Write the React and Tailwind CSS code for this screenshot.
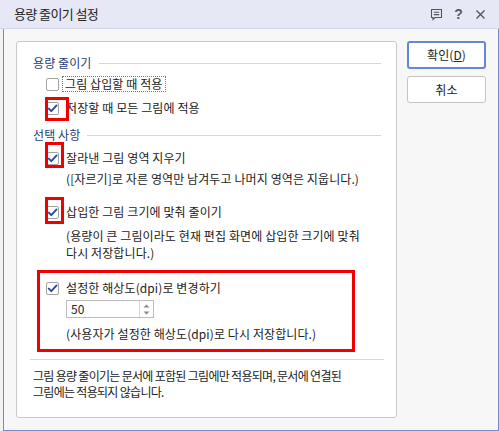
import React from "react";

const FONT = { fontFamily: '"Noto Sans CJK KR", "Noto Sans", sans-serif' };

function Check({ checked }) {
  return (
    <span className="w-[13px] h-[13px] border border-[#a3a3a3] bg-white rounded-[2px] flex items-center justify-center shrink-0">
      {checked && (
        <svg width="11" height="11" viewBox="0 0 11 11">
          <path d="M1.8 5.6 L4.3 8.2 L9.6 2.4" stroke="#2a4a9c" strokeWidth="1.9" fill="none" strokeLinecap="round" strokeLinejoin="round" />
        </svg>
      )}
    </span>
  );
}

function Header({ children, className }) {
  return (
    <div className={"flex items-center h-[16px] pr-[15px] " + (className || "")}>
      <span className="text-[#1f3b78]">{children}</span>
      <div className="flex-1 h-px bg-[#d8d8d8] ml-[7px]" />
    </div>
  );
}

function Row({ checked, children, className }) {
  return (
    <div className={"flex items-center h-[16px] ml-[13px] " + (className || "")}>
      <Check checked={checked} />
      <span className="ml-[7px]">{children}</span>
    </div>
  );
}

export default function App() {
  return (
    <div className="w-[499px] h-[431px] bg-[#f3f3f3] text-[12px] tracking-[0.1px] text-[#222] overflow-hidden" style={FONT}>
      {/* Title bar */}
      <div className="h-[29px] bg-[#e6e8f5] border-b border-[#d2d6ec] flex items-center pl-[14px] pr-[12px]">
        <span className="text-[13px] text-[#222] tracking-[-0.6px]">용량 줄이기 설정</span>
        <div className="flex-1" />
        <div className="flex items-center gap-[9px] text-[#555]">
          <svg width="13" height="13" viewBox="0 0 13 13" fill="none" stroke="#555" strokeWidth="1.1">
            <path d="M1.5 1.5 H11.5 V9.5 H5 L3 11.5 V9.5 H1.5 Z" />
            <path d="M3.8 4.3 H9.2 M3.8 6.6 H9.2" />
          </svg>
          <span className="w-[13px] text-center text-[14px] font-bold text-[#5a5a5a] leading-none tracking-normal" style={{ fontFamily: '"Liberation Sans", sans-serif' }}>?</span>
          <svg width="13" height="13" viewBox="0 0 13 13" stroke="#555" strokeWidth="1.3">
            <path d="M2.5 2.5 L10.5 10.5 M10.5 2.5 L2.5 10.5" />
          </svg>
        </div>
      </div>

      {/* Body */}
      <div className="ml-[3px] w-[496px] h-[402px] bg-[#f7f7f7] border-l border-r border-b border-[#7b89c7] pl-[12px] pt-[12px] flex">
        {/* Panel */}
        <div className="relative w-[381px] h-[377px] bg-white border border-[#cacaca] rounded-[3px] pl-[16px]">
          <Header className="mt-[13px]">용량 줄이기</Header>
          <div className="flex items-center h-[16px] ml-[13px] mt-[5px]">
            <Check checked={false} />
            <span className="ml-[3px] border border-dotted border-[#777] px-[2px] leading-[14px]">그림 삽입할 때 적용</span>
          </div>
          <Row checked className="mt-[8px]">저장할 때 모든 그림에 적용</Row>

          <Header className="mt-[11px]">선택 사항</Header>
          <Row checked className="mt-[7px]">잘라낸 그림 영역 지우기</Row>
          <div className="ml-[33px] mt-[5px] leading-[16px]">([자르기]로 자른 영역만 남겨두고 나머지 영역은 지웁니다.)</div>

          <Row checked className="mt-[17px]">삽입한 그림 크기에 맞춰 줄이기</Row>
          <div className="ml-[33px] mt-[7px] leading-[17px]">
            <div>(용량이 큰 그림이라도 현재 편집 화면에 삽입한 크기에 맞춰</div>
            <div>다시 저장합니다.)</div>
          </div>

          <Row checked className="mt-[19px]">설정한 해상도(dpi)로 변경하기</Row>
          <div className="ml-[33px] mt-[4px] w-[88px] h-[18px] border border-[#bcbcbc] bg-white flex">
            <span className="flex-1 pl-[4px] leading-[16px]">50</span>
            <div className="w-[14px] border-l border-[#d4d4d4] flex flex-col items-center justify-center gap-[3px]">
              <svg width="7" height="4" viewBox="0 0 7 4"><path d="M0.5 3.5 L3.5 0.5 L6.5 3.5 Z" fill="#8a8a8a" /></svg>
              <svg width="7" height="4" viewBox="0 0 7 4"><path d="M0.5 0.5 L3.5 3.5 L6.5 0.5 Z" fill="#8a8a8a" /></svg>
            </div>
          </div>
          <div className="ml-[33px] mt-[8px] leading-[16px]">(사용자가 설정한 해상도(dpi)로 다시 저장합니다.)</div>

          <div className="-ml-[3px] mt-[17px] w-[354px] h-px bg-[#d8d8d8]" />
          <div className="mt-[8px] leading-[16px] tracking-[-0.7px]">
            <div>그림 용량 줄이기는 문서에 포함된 그림에만 적용되며, 문서에 연결된</div>
            <div>그림에는 적용되지 않습니다.</div>
          </div>

          {/* Red annotation boxes */}
          <div className="absolute left-[28px] top-[55px] w-[24px] h-[24px] border-[3px] border-[#f00000]" />
          <div className="absolute left-[28px] top-[100px] w-[19px] h-[26px] border-[3px] border-[#f00000]" />
          <div className="absolute left-[28px] top-[155px] w-[19px] h-[27px] border-[3px] border-[#f00000]" />
          <div className="absolute left-[20px] top-[228px] w-[318px] h-[82px] border-[3px] border-[#f00000]" />
        </div>

        {/* Buttons */}
        <div className="ml-[10px] flex flex-col gap-[7px]">
          <button className="w-[79px] h-[28px] bg-white border-2 border-[#6585d8] rounded-[3px] text-[12px] text-[#222] flex items-center justify-center">
            확인(<span className="underline">D</span>)
          </button>
          <button className="w-[79px] h-[27px] bg-white border border-[#c4c4c4] rounded-[3px] text-[12px] text-[#222] flex items-center justify-center">
            취소
          </button>
        </div>
      </div>
    </div>
  );
}
